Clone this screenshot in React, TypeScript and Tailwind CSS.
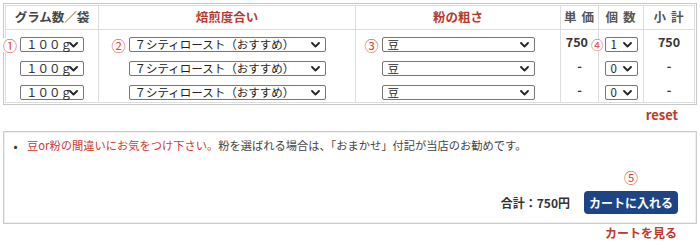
import React from "react";

function Chevron() {
  return (
    <svg width="9" height="6" viewBox="0 0 9 6" className="absolute right-[5px] top-1/2 -translate-y-1/2">
      <path d="M1 1 L4.5 4.5 L8 1" fill="none" stroke="#222" strokeWidth="1.8" strokeLinecap="round" strokeLinejoin="round" />
    </svg>
  );
}

function Sel({
  w,
  text,
  num,
  textCls = "",
  numCls = "mr-[3px] text-[14px]",
}: {
  w: string;
  text: string;
  num?: string;
  textCls?: string;
  numCls?: string;
}) {
  return (
    <div className={`relative inline-flex items-center h-[15px] ${w} align-middle`}>
      {num && (
        <span className={`absolute right-full top-1/2 -translate-y-1/2 leading-none text-[#e0473c] bg-white ${numCls}`}>
          {num}
        </span>
      )}
      <div
        className={`relative w-full h-full border border-[#767676] rounded-[2px] bg-white pl-[5px] flex items-center text-[11.5px] leading-none text-[#222] ${textCls}`}
      >
        {text}
        <Chevron />
      </div>
    </div>
  );
}

const th = "h-[24px] border-b border-r border-[#ddd] text-center font-bold text-[12.5px] p-0";
const td = "border-r border-[#ddd] text-center p-0 align-middle";

function Row({ first, h }: { first?: boolean; h: string }) {
  return (
    <tr className={h}>
      <td className={td}>
        <Sel w="w-[64px]" text="１００ｇ" num={first ? "①" : undefined} textCls="text-[10px]" />
      </td>
      <td className={td}>
        <Sel w="w-[197px]" text="７シティロースト（おすすめ）" num={first ? "②" : undefined} />
      </td>
      <td className={td}>
        <Sel w="w-[153px]" text="豆" num={first ? "③" : undefined} />
      </td>
      {first ? (
        <td className="border-r border-[#ddd] text-right pr-[10px] align-middle font-bold text-[12.5px] text-[#333]">750</td>
      ) : (
        <td className={`${td} font-bold text-[12.5px] text-[#333]`}>-</td>
      )}
      <td className={td}>
        <Sel
          w="w-[33px]"
          text={first ? "1" : "0"}
          num={first ? "④" : undefined}
          textCls="pl-[3px]"
          numCls="mr-[1px] text-[12.5px]"
        />
      </td>
      <td className="text-center p-0 align-middle font-bold text-[12.5px] text-[#333]">{first ? "750" : "-"}</td>
    </tr>
  );
}

export default function App() {
  return (
    <div className="w-[700px] h-[246px] bg-white font-['Noto_Sans_CJK_JP',sans-serif] text-[#333] pt-[3px] px-[3px] overflow-hidden">
      <div className="border border-[#c8c8c8] p-px">
        <table className="w-full table-fixed border-separate border-spacing-0 border border-[#ddd]">
          <colgroup>
            <col className="w-[93px]" />
            <col className="w-[257px]" />
            <col className="w-[205px]" />
            <col className="w-[38px]" />
            <col className="w-[45px]" />
            <col className="w-[50px]" />
          </colgroup>
          <thead>
            <tr>
              <th className={`${th} text-[#444]`}>グラム数／袋</th>
              <th className={`${th} text-[#b8392e]`}>焙煎度合い</th>
              <th className={`${th} text-[#b8392e]`}>粉の粗さ</th>
              <th className={`${th} text-[#555] tracking-[1px]`}>単 価</th>
              <th className={`${th} text-[#555] tracking-[1px]`}>個 数</th>
              <th className="h-[24px] border-b border-[#ddd] text-center font-bold text-[12.5px] p-0 text-[#555] tracking-[1px]">
                小 計
              </th>
            </tr>
          </thead>
          <tbody>
            <Row first h="h-[23px]" />
            <Row h="h-[23px]" />
            <Row h="h-[24px]" />
          </tbody>
        </table>
      </div>
      <div className="flex justify-end items-center h-[19px] pr-[19px] text-[13px] font-bold text-[#c0392b]">reset</div>
      <div className="mt-[7px] h-[93px] border border-[#ccc] shadow-[inset_0_0_0_1px_#efefef] flex flex-col justify-between pt-[6px] pb-[9px]">
        <div className="flex items-center h-[16px] text-[11.25px] leading-none">
          <span className="w-[23px] text-center text-[#333] text-[12px]">•</span>
          <span className="text-[#d03a2f]">豆or粉の間違いにお気をつけ下さい。</span>
          <span className="text-[#444]">粉を選ばれる場合は、「おまかせ」付記が当店のお勧めです。</span>
        </div>
        <div className="flex justify-end items-end gap-[14px] pr-[18px]">
          <div className="h-[23px] flex items-center font-bold text-[12px] text-[#333]">合計：750円</div>
          <div className="flex flex-col items-center">
            <span className="text-[14px] leading-none text-[#e0473c] mb-[7px]">⑤</span>
            <button className="h-[23px] w-[94px] rounded-[4px] bg-[#1d4586] text-white font-bold text-[12px] flex items-center justify-center">
              カートに入れる
            </button>
          </div>
        </div>
      </div>
      <div className="flex justify-end items-center h-[17px] pr-[20px] text-[12px] font-bold text-[#c0392b]">カートを見る</div>
    </div>
  );
}
